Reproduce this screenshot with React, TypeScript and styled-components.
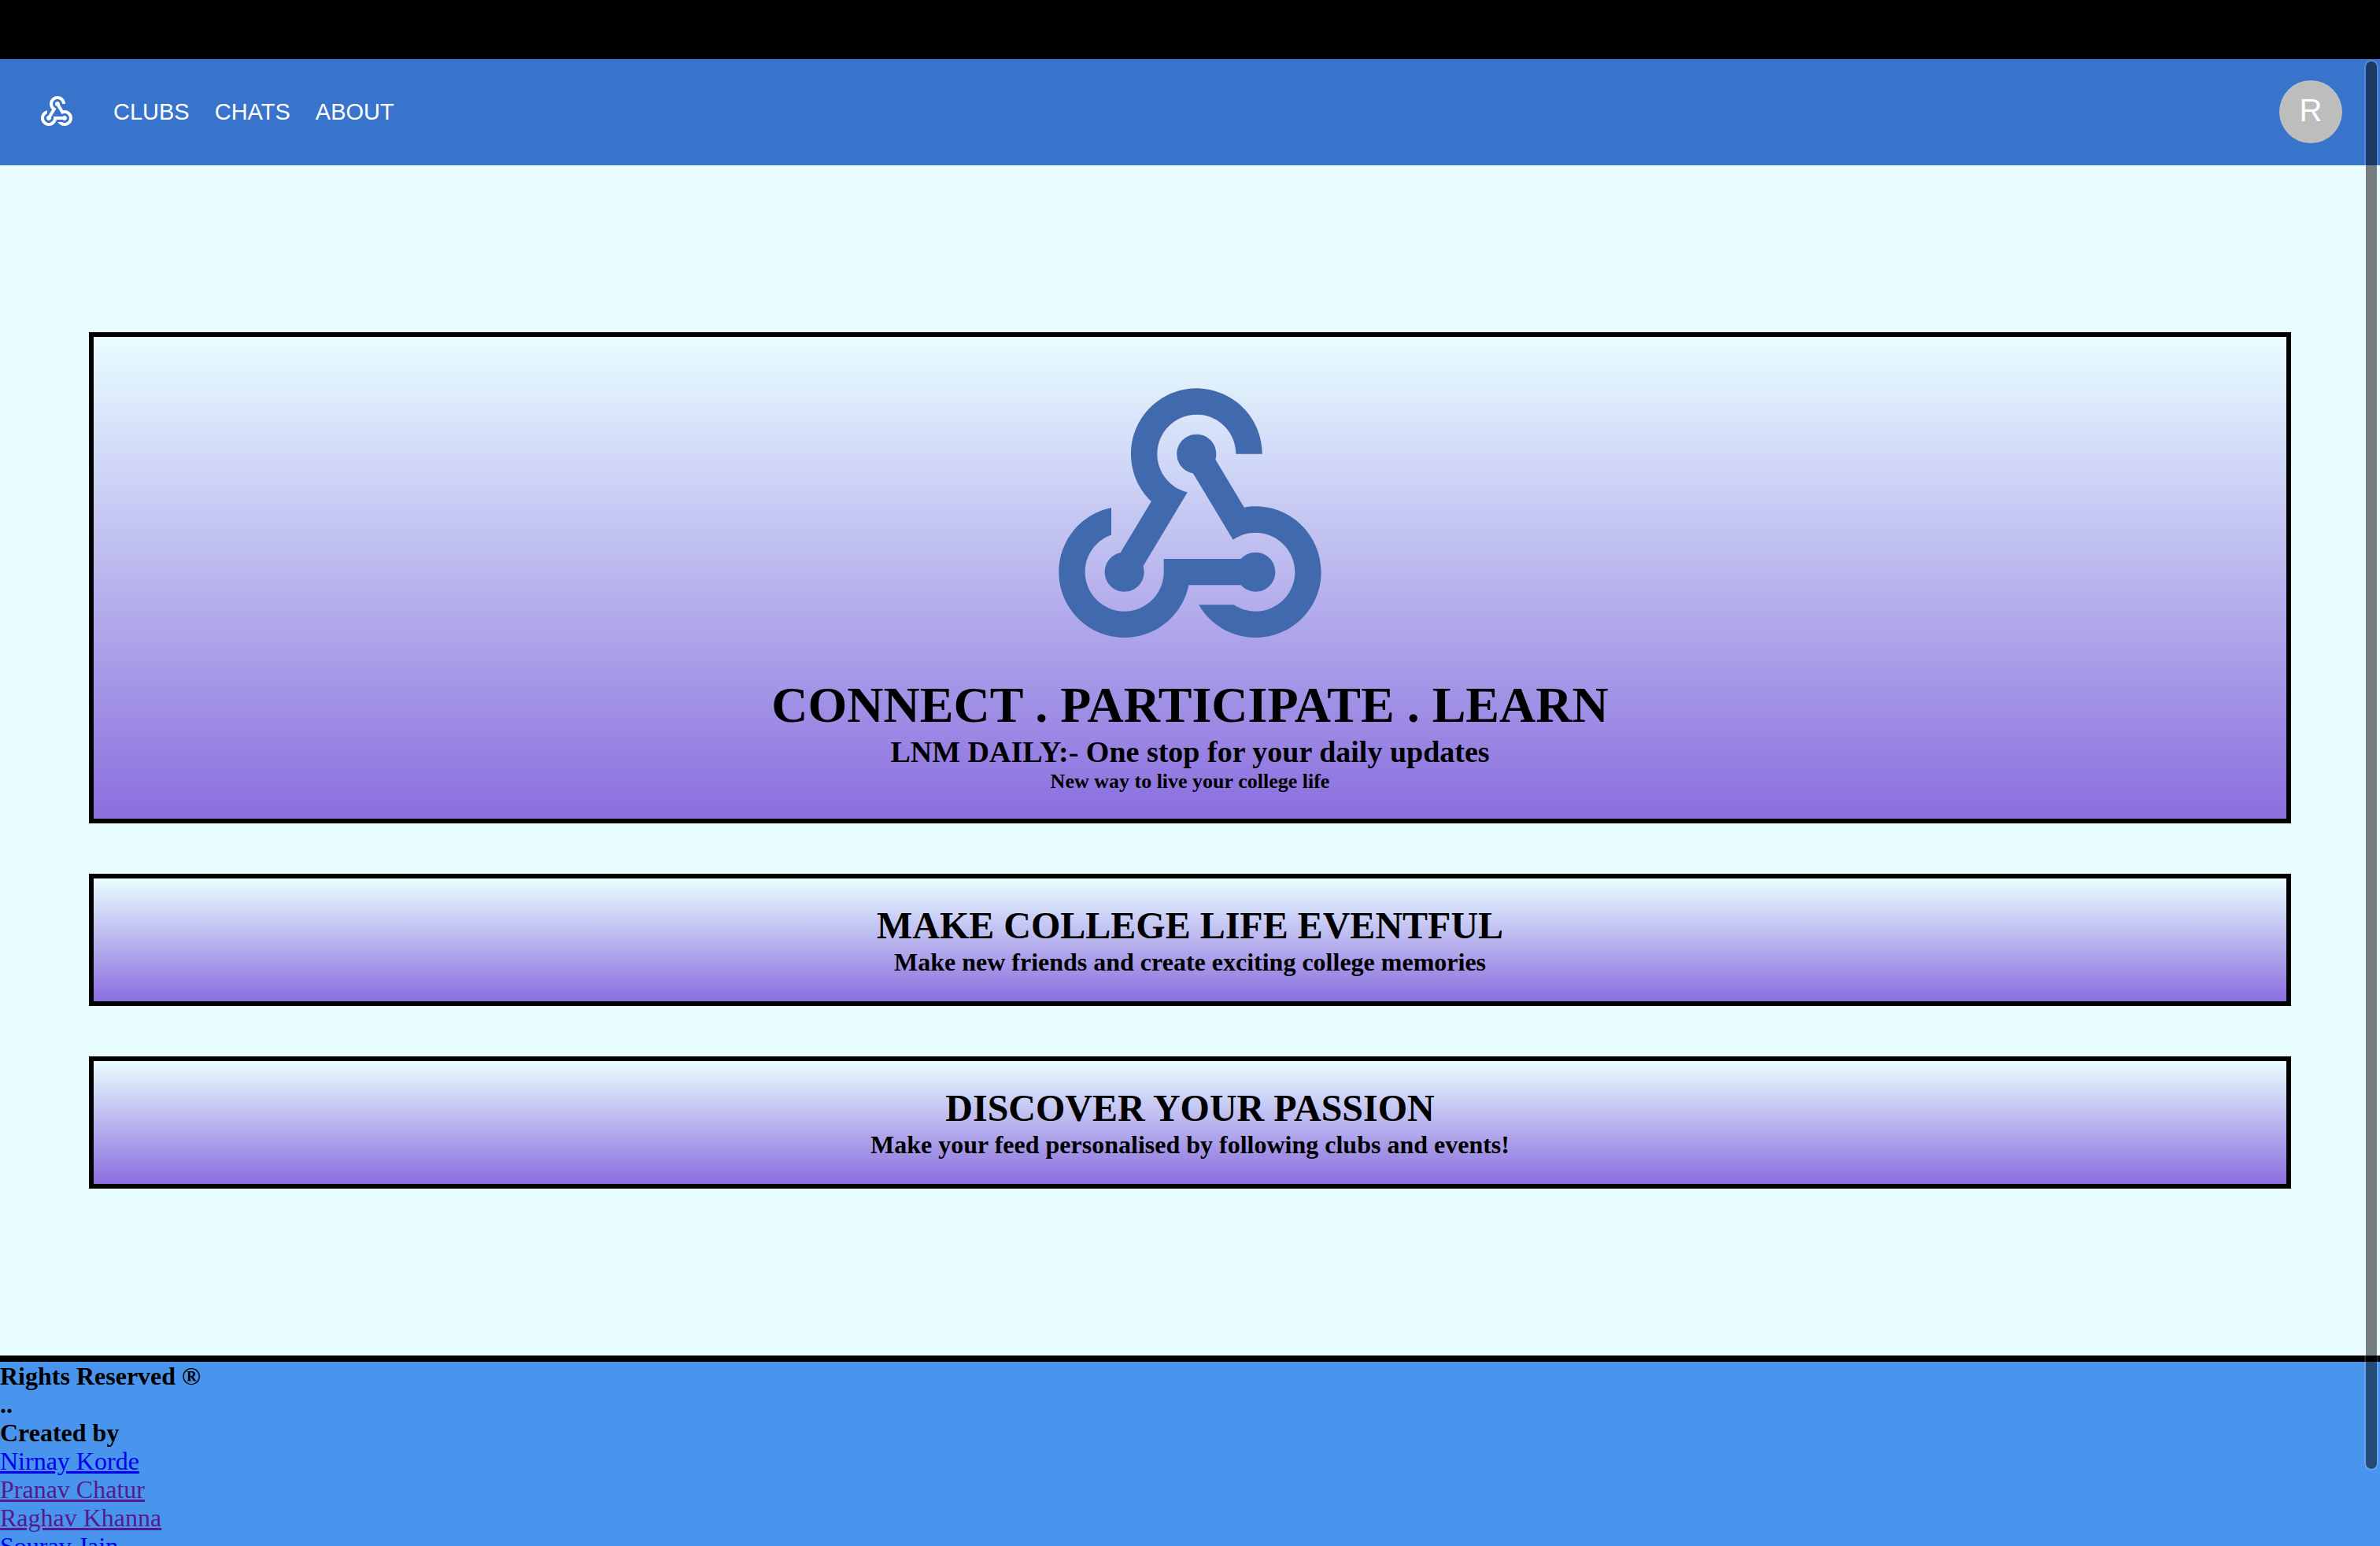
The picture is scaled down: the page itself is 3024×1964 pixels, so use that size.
import React from "react";
import styled, { createGlobalStyle } from "styled-components";

const GlobalStyle = createGlobalStyle`
  * {
    box-sizing: border-box;
    margin: 0;
    padding: 0;
  }

  body {
    background: #e9fdff;
    color: #000;
    font-family: "Liberation Serif", "Times New Roman", serif;
  }
`;

const Screen = styled.div`
  position: relative;
  display: flex;
  flex-direction: column;
  height: 100vh;
  overflow: hidden;
`;

const TopStrip = styled.div`
  flex: none;
  height: 75px;
  background: #000;
`;

const Scroller = styled.div`
  flex: 1;
  min-height: 0;
  overflow-y: auto;
  scrollbar-width: none;
`;

const ScrollThumb = styled.div`
  position: absolute;
  top: 76px;
  right: 2px;
  bottom: 96px;
  width: 18px;
  border: 2px solid rgba(255, 255, 255, 0.15);
  border-radius: 9px;
  background: rgba(0, 0, 0, 0.5);
  background-clip: padding-box;
`;

const Header = styled.header`
  display: flex;
  align-items: center;
  justify-content: space-between;
  padding: 27px 48px 28px;
  background: #3874cb;
  color: #fff;
  font-family: "Liberation Sans", Arial, sans-serif;
`;

const Nav = styled.nav`
  display: flex;
  align-items: center;
  gap: 48px;
`;

const NavLinks = styled.div`
  display: flex;
  gap: 32px;
`;

const NavLink = styled.a`
  display: block;
  color: inherit;
  font-size: 29px;
  line-height: 36px;
  text-decoration: none;
`;

const Avatar = styled.button`
  width: 80px;
  height: 80px;
  padding-bottom: 4px;
  border: 0;
  border-radius: 50%;
  background: #bdbdbd;
  color: #fff;
  font-family: inherit;
  font-size: 40px;
  line-height: 40px;
  cursor: pointer;
`;

const Logo = styled.svg<{ $size: number; $color: string }>`
  display: block;
  width: ${(p) => p.$size}px;
  height: ${(p) => p.$size}px;
  fill: ${(p) => p.$color};
`;

const Main = styled.main`
  display: flex;
  flex-direction: column;
  gap: 64px;
  padding: 212px 113px;
`;

const Panel = styled.section`
  display: flex;
  flex-direction: column;
  align-items: center;
  padding: 32px;
  border: 6px solid #000;
  background: linear-gradient(#e9fdff, #8a6ede);
  text-align: center;
`;

const HeroTitle = styled.h1`
  font-size: 64px;
  line-height: 72px;
`;

const HeroSubtitle = styled.h2`
  font-size: 38px;
  line-height: 46px;
`;

const HeroNote = styled.h3`
  font-size: 26px;
  line-height: 30px;
`;

const PanelTitle = styled.h2`
  font-size: 48px;
  line-height: 56px;
`;

const PanelText = styled.h3`
  font-size: 32px;
  line-height: 36px;
`;

const Footer = styled.footer`
  border-top: 8px solid #000;
  background: #4995ed;
  font-size: 32px;
  line-height: 36px;
`;

const FooterLine = styled.p`
  font-weight: bold;
`;

const Authors = styled.ul`
  list-style: none;
`;

const AuthorLink = styled.a<{ $visited: boolean }>`
  color: ${(p) => (p.$visited ? "#551a8b" : "#0000ee")};
  text-decoration: underline;
`;

const WebhookLogo = ({ size, color }: { size: number; color: string }) => (
  <Logo viewBox="0 0 24 24" $size={size} $color={color} aria-hidden="true">
    <path d="M10 15h5.88c.27-.31.67-.5 1.12-.5.83 0 1.5.67 1.5 1.5s-.67 1.5-1.5 1.5c-.44 0-.84-.19-1.12-.5H11.9c-.46 2.28-2.48 4-4.9 4-2.76 0-5-2.24-5-5 0-2.42 1.72-4.44 4-4.9v2.07c-1.16.41-2 1.53-2 2.83 0 1.65 1.35 3 3 3s3-1.35 3-3v-1zm2.5-11c1.65 0 3 1.35 3 3h2c0-2.76-2.24-5-5-5s-5 2.24-5 5c0 1.43.6 2.71 1.55 3.62l-2.35 3.9c-.68.14-1.2.75-1.2 1.48 0 .83.67 1.5 1.5 1.5s1.5-.67 1.5-1.5c0-.16-.02-.31-.07-.45l3.38-5.63C10.49 9.61 9.5 8.42 9.5 7c0-1.65 1.35-3 3-3zM17 13c-.64 0-1.23.2-1.72.54l-3.05-5.07C11.53 8.35 11 7.74 11 7c0-.83.67-1.5 1.5-1.5S14 6.17 14 7c0 .15-.02.29-.06.43l2.19 3.65c.28-.05.57-.08.87-.08 2.76 0 5 2.24 5 5s-2.24 5-5 5c-1.85 0-3.47-1.01-4.33-2.5h2.67c.48.32 1.05.5 1.66.5 1.65 0 3-1.35 3-3s-1.35-3-3-3z" />
  </Logo>
);

const pages = ["CLUBS", "CHATS", "ABOUT"];

const features = [
  {
    title: "MAKE COLLEGE LIFE EVENTFUL",
    text: "Make new friends and create exciting college memories",
  },
  {
    title: "DISCOVER YOUR PASSION",
    text: "Make your feed personalised by following clubs and events!",
  },
];

const authors = [
  { name: "Nirnay Korde", visited: false },
  { name: "Pranav Chatur", visited: true },
  { name: "Raghav Khanna", visited: true },
  { name: "Sourav Jain", visited: false },
];

export default function App() {
  return (
    <Screen>
      <GlobalStyle />
      <TopStrip />
      <Scroller>
        <Header>
          <Nav>
            <a href="#home" aria-label="Home">
              <WebhookLogo size={48} color="#fff" />
            </a>
            <NavLinks>
              {pages.map((page) => (
                <NavLink key={page} href={`#${page.toLowerCase()}`}>
                  {page}
                </NavLink>
              ))}
            </NavLinks>
          </Nav>
          <Avatar type="button">R</Avatar>
        </Header>
        <Main>
          <Panel>
            <WebhookLogo size={400} color="#4169ad" />
            <HeroTitle>CONNECT . PARTICIPATE . LEARN</HeroTitle>
            <HeroSubtitle>LNM DAILY:- One stop for your daily updates</HeroSubtitle>
            <HeroNote>New way to live your college life</HeroNote>
          </Panel>
          {features.map((feature) => (
            <Panel key={feature.title}>
              <PanelTitle>{feature.title}</PanelTitle>
              <PanelText>{feature.text}</PanelText>
            </Panel>
          ))}
        </Main>
        <Footer>
          <FooterLine>Rights Reserved ®</FooterLine>
          <FooterLine>..</FooterLine>
          <FooterLine>Created by</FooterLine>
          <Authors>
            {authors.map((author) => (
              <li key={author.name}>
                <AuthorLink href="#author" $visited={author.visited}>
                  {author.name}
                </AuthorLink>
              </li>
            ))}
          </Authors>
        </Footer>
      </Scroller>
      <ScrollThumb />
    </Screen>
  );
}
